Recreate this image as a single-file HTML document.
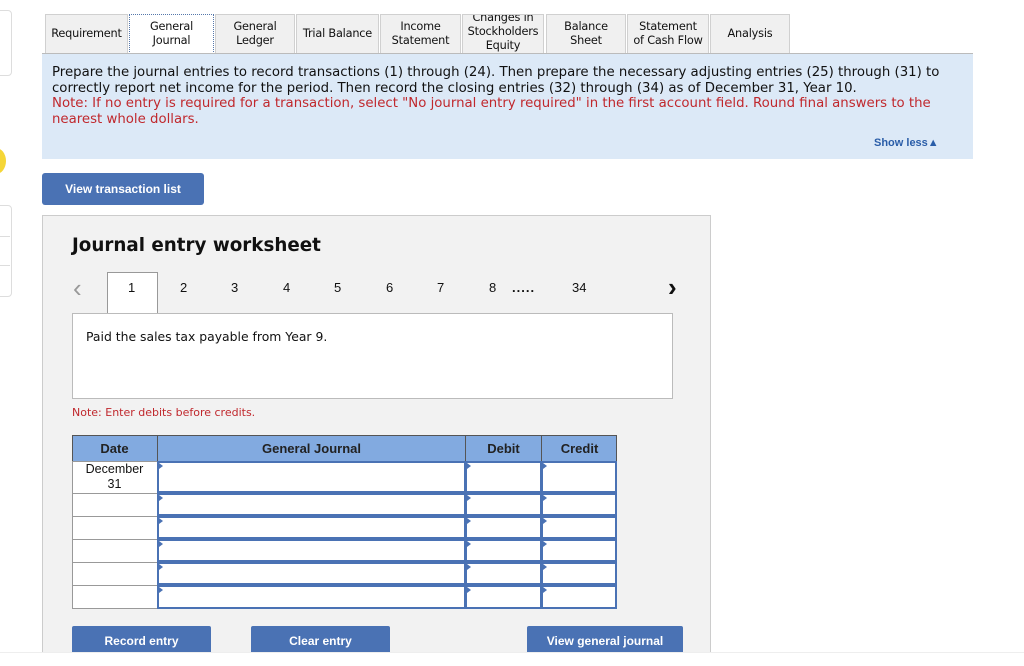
<!DOCTYPE html>
<html><head><style>
body{margin:0;width:1024px;height:665px;background:#fff;font-family:"Liberation Sans",Arial,sans-serif;position:relative;overflow:hidden}
.a{position:absolute}
.tab{position:absolute;top:14px;height:39px;background:#f0f0f0;border:1px solid #d0d0d0;border-bottom:none;box-sizing:border-box;font-family:"DejaVu Sans",Verdana,sans-serif;font-size:11.3px;letter-spacing:-0.2px;display:flex;align-items:center;justify-content:center;text-align:center;line-height:14px;color:#111}
.btn{position:absolute;background:#4a72b4;color:#fff;font-weight:bold;font-size:12px;display:flex;align-items:center;justify-content:center;border-radius:3px}
.pg{position:absolute;top:280px;font-size:13px;color:#111}
.cell{position:absolute;box-sizing:border-box;background:#fff}
</style></head><body>
<div class="a" style="left:-10px;top:10px;width:20px;height:64px;border:1px solid #ddd;border-radius:4px"></div>
<div class="a" style="left:-14px;top:148px;width:20px;height:26px;border-radius:50%;background:#f5d637"></div>
<div class="a" style="left:-10px;top:205px;width:20px;height:90px;border:1px solid #ddd;border-radius:4px"></div>
<div class="a" style="left:-10px;top:236px;width:20px;height:1px;background:#ddd"></div>
<div class="a" style="left:-10px;top:265px;width:20px;height:1px;background:#ddd"></div>

<div class="tab" style="left:45px;width:83px">Requirement</div>
<div class="tab" style="left:129px;width:85px;background:#fff;border:1px dotted #5577aa;border-bottom:1px dotted #5577aa;height:40px">General<br>Journal</div>
<div class="tab" style="left:215px;width:80px">General<br>Ledger</div>
<div class="tab" style="left:296px;width:83px">Trial Balance</div>
<div class="tab" style="left:380px;width:81px">Income<br>Statement</div>
<div class="tab" style="left:462px;width:82px;align-items:flex-end;overflow:hidden">Changes in<br>Stockholders<br>Equity</div>
<div class="tab" style="left:546px;width:80px">Balance<br>Sheet</div>
<div class="tab" style="left:627px;width:82px">Statement<br>of Cash Flow</div>
<div class="tab" style="left:710px;width:80px">Analysis</div>
<div class="a" style="left:42px;top:53px;width:931px;height:1px;background:#bbb"></div>

<div class="a" style="left:42px;top:54px;width:931px;height:105px;background:#dce9f7"></div>
<div class="a" style="left:52px;top:65px;width:900px;font-family:'DejaVu Sans',Verdana,sans-serif;font-size:13.3px;line-height:15.5px;color:#111">Prepare the journal entries to record transactions (1) through (24). Then prepare the necessary adjusting entries (25) through (31) to correctly report net income for the period. Then record the closing entries (32) through (34) as of December 31, Year 10.<br><span style="color:#c0282d">Note: If no entry is required for a transaction, select "No journal entry required" in the first account field. Round final answers to the nearest whole dollars.</span></div>
<div class="a" style="left:874px;top:137px;font-size:11px;font-weight:bold;color:#2a5da8">Show less&#9650;</div>

<div class="btn" style="left:42px;top:173px;width:162px;height:32px">View transaction list</div>

<div class="a" style="left:42px;top:215px;width:669px;height:440px;background:#f2f2f2;border:1px solid #ccc;box-sizing:border-box"></div>
<div class="a" style="left:72px;top:235px;font-family:'DejaVu Sans',Verdana,sans-serif;font-size:18.3px;font-weight:bold;color:#111">Journal entry worksheet</div>
<div class="a" style="left:73px;top:273px;font-size:26px;color:#999">&lsaquo;</div>
<div class="a" style="left:107px;top:272px;width:51px;height:42px;background:#fff;border:1px solid #999;border-bottom:none;box-sizing:border-box"></div>
<div class="pg" style="left:128px">1</div><div class="pg" style="left:180px">2</div><div class="pg" style="left:231px">3</div><div class="pg" style="left:283px">4</div><div class="pg" style="left:334px">5</div><div class="pg" style="left:386px">6</div><div class="pg" style="left:437px">7</div><div class="pg" style="left:489px">8</div>
<div class="pg" style="left:512px;font-weight:bold;letter-spacing:1px">.....</div>
<div class="pg" style="left:572px">34</div>
<div class="a" style="left:668px;top:272px;font-size:26px;color:#111;font-weight:bold">&rsaquo;</div>
<div class="a" style="left:72px;top:313px;width:601px;height:86px;background:#fff;border:1px solid #bbb;box-sizing:border-box"></div>
<div class="a" style="left:86px;top:329px;font-family:'DejaVu Sans',Verdana,sans-serif;font-size:12.4px;color:#111">Paid the sales tax payable from Year 9.</div>
<div class="a" style="left:72px;top:406px;font-family:'DejaVu Sans',Verdana,sans-serif;font-size:11px;color:#c0282d">Note: Enter debits before credits.</div>

<div class="a" style="left:72px;top:435px;width:545px;height:27px;background:#82aae0;border:1px solid #555;box-sizing:border-box"></div>
<div class="a" style="left:157px;top:435px;width:1px;height:26px;background:#555"></div>
<div class="a" style="left:465px;top:435px;width:1px;height:26px;background:#555"></div>
<div class="a" style="left:541px;top:435px;width:1px;height:26px;background:#555"></div>
<div class="a" style="left:72px;top:441px;width:85px;text-align:center;font-weight:bold;font-size:13px;color:#222">Date</div>
<div class="a" style="left:158px;top:441px;width:307px;text-align:center;font-weight:bold;font-size:13px;color:#222">General Journal</div>
<div class="a" style="left:466px;top:441px;width:75px;text-align:center;font-weight:bold;font-size:13px;color:#222">Debit</div>
<div class="a" style="left:542px;top:441px;width:75px;text-align:center;font-weight:bold;font-size:13px;color:#222">Credit</div>

<div class="a" style="left:72px;top:461px;width:545px;height:148px;background:#fff;border:1px solid #999;box-sizing:border-box"></div>
<div class="a" style="left:72px;top:462px;width:85px;text-align:center;font-size:12.5px;line-height:15px;color:#111">December<br>31</div>
<div id="rows"></div>
<script>
var tops=[461,493,516,539,562,585],hs=[32,23,23,23,23,24],h='';
for(var i=0;i<6;i++){
 if(i>0)h+='<div class="a" style="left:72px;top:'+tops[i]+'px;width:86px;height:1px;background:#999"></div>';
 [[157,309],[465,77],[541,76]].forEach(function(c){
  h+='<div class="cell" style="left:'+c[0]+'px;top:'+tops[i]+'px;width:'+c[1]+'px;height:'+hs[i]+'px;border:2px solid #4a72b4"></div>';
  h+='<div class="a" style="left:'+(c[0]+2)+'px;top:'+(tops[i]+2)+'px;width:0;height:0;border-top:3px solid transparent;border-bottom:3px solid transparent;border-left:4px solid #4a72b4"></div>';
 });
}
document.getElementById('rows').innerHTML=h;
</script>

<div class="btn" style="left:72px;top:626px;width:139px;height:30px;border-radius:2px 2px 0 0">Record entry</div>
<div class="btn" style="left:251px;top:626px;width:139px;height:30px;border-radius:2px 2px 0 0">Clear entry</div>
<div class="btn" style="left:527px;top:626px;width:156px;height:30px;border-radius:2px 2px 0 0">View general journal</div>
<div class="a" style="left:0;top:652px;width:1024px;height:13px;background:#fff;border-top:1px solid #eee"></div>
</body></html>
